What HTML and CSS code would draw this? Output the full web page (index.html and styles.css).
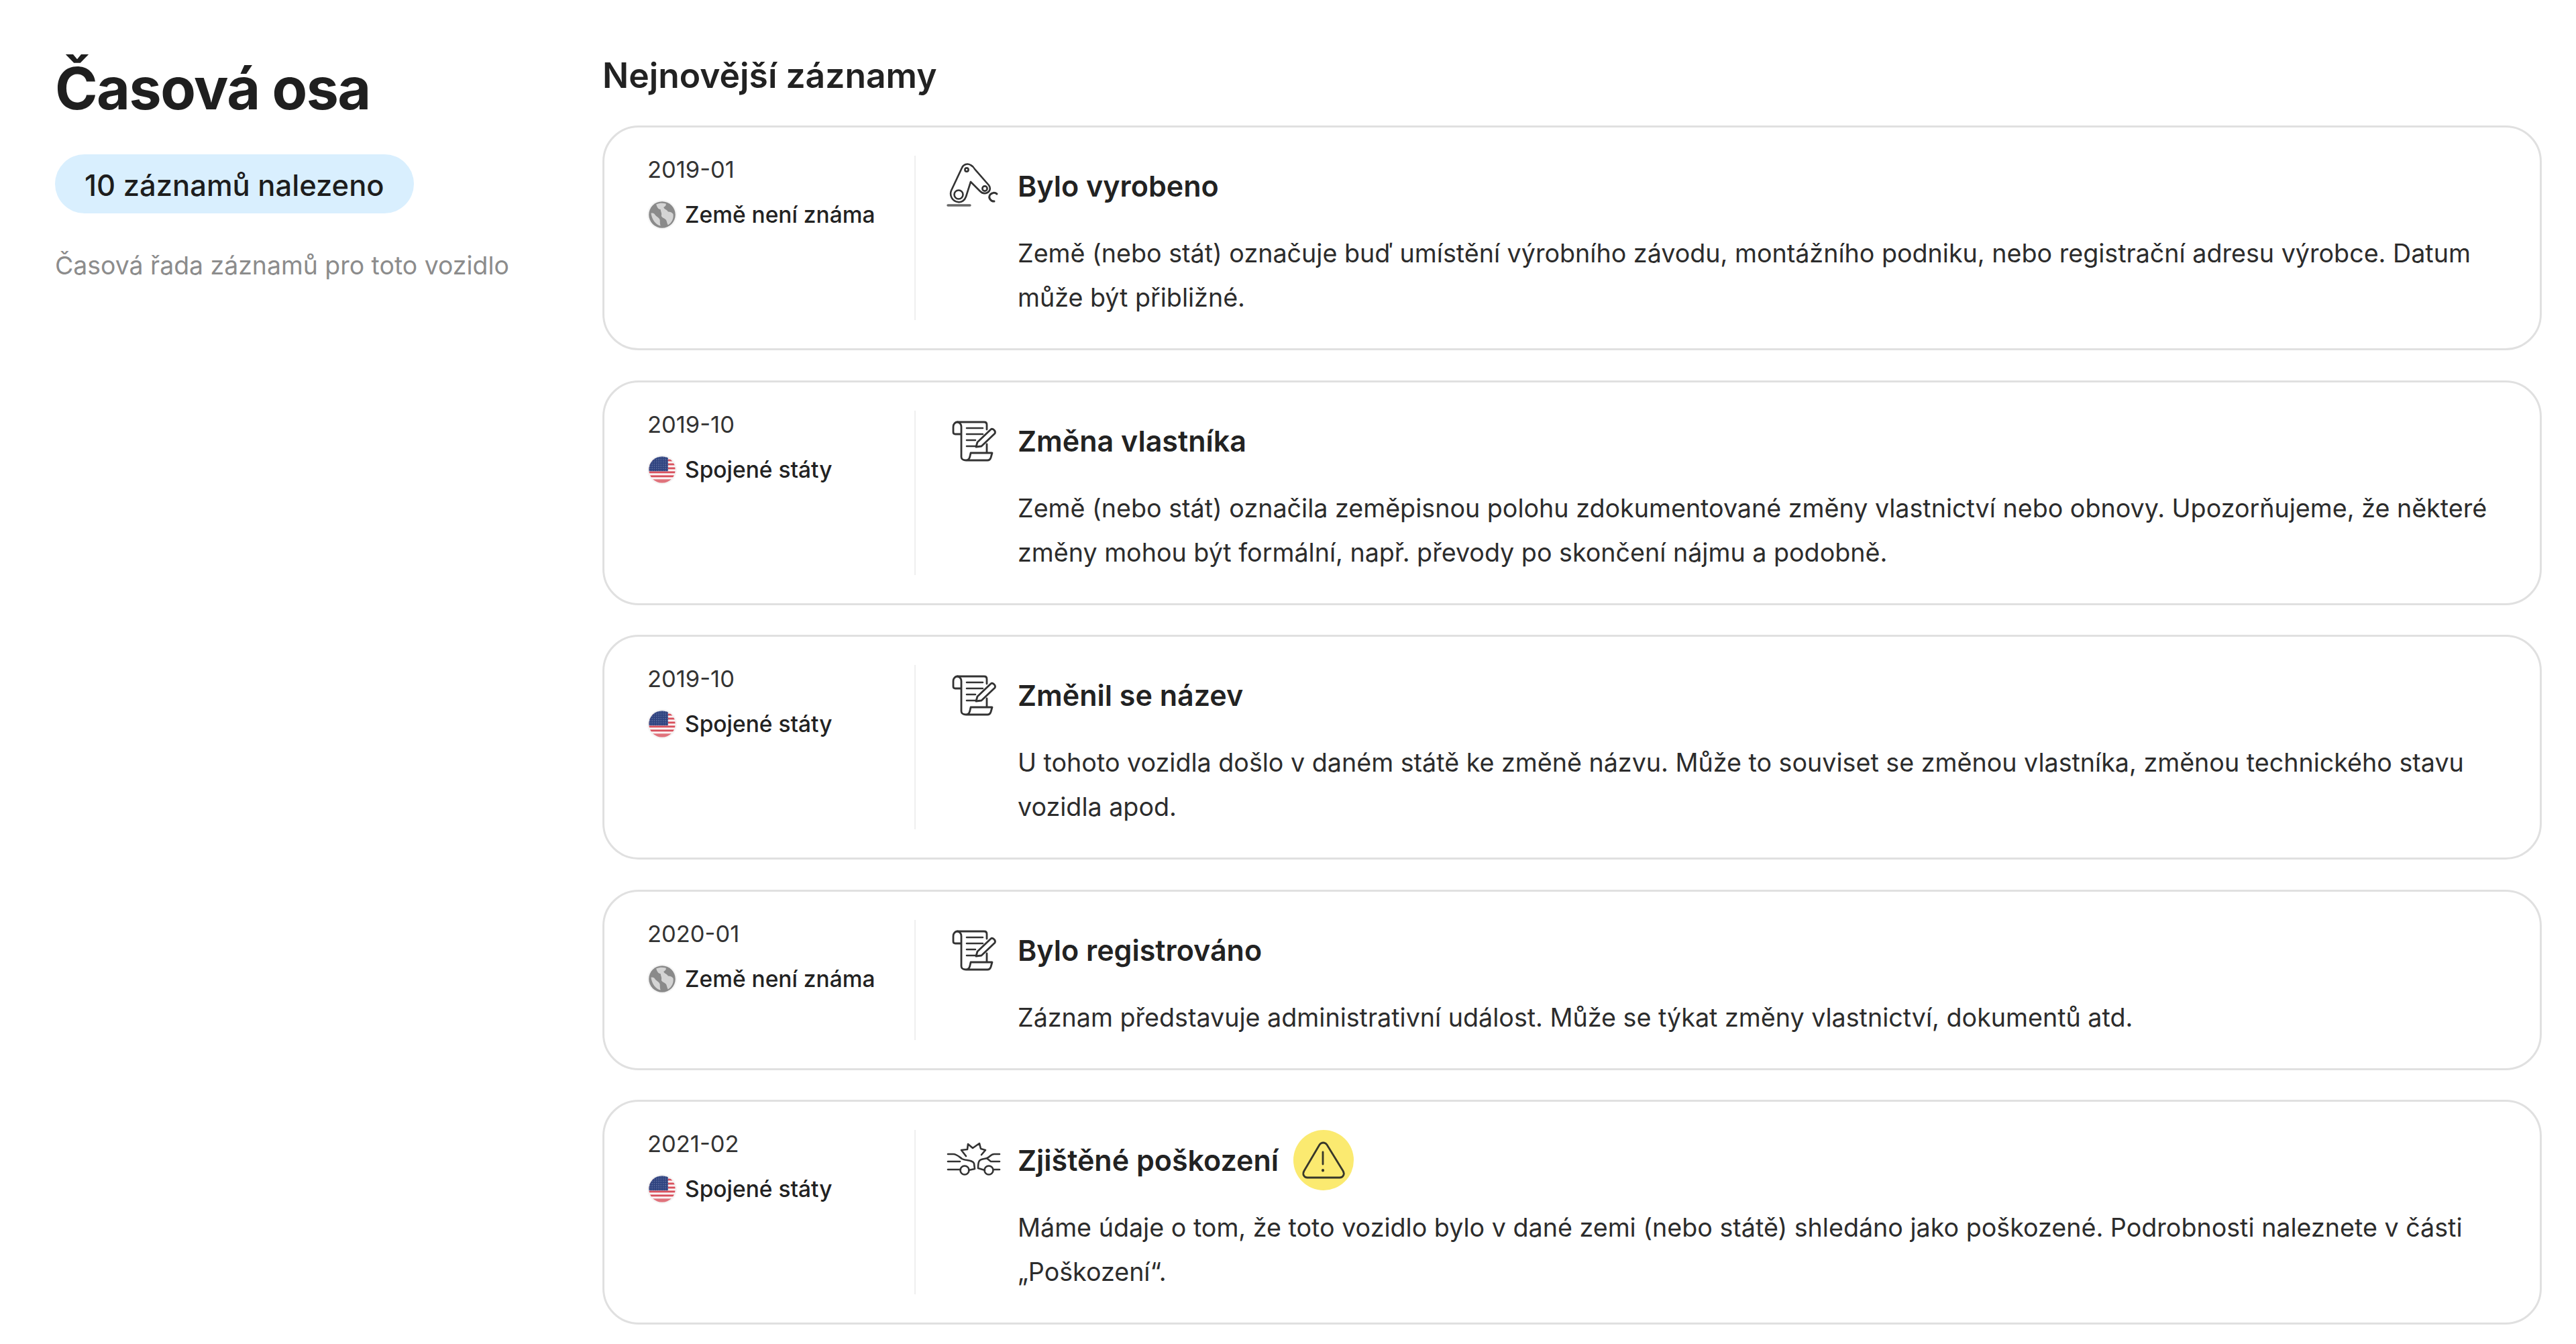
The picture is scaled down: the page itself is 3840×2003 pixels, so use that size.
FILE: index.html
```html
<!DOCTYPE html>
<html lang="cs">
<head>
<meta charset="utf-8">
<title>Časová osa</title>
<link rel="stylesheet" href="styles.css">
</head>
<body>
<svg class="defs" width="0" height="0" aria-hidden="true">
  <defs>
    <clipPath id="disc"><circle cx="18" cy="18" r="18"/></clipPath>
    <pattern id="stars" width="3" height="3" patternUnits="userSpaceOnUse">
      <circle cx="1.5" cy="1.5" r="0.6" fill="#8f9cc0"/>
    </pattern>
    <symbol id="flag" viewBox="0 0 40 40">
      <circle cx="20" cy="20" r="20" fill="#f5f5f5"/>
      <g transform="translate(2 2)" clip-path="url(#disc)">
        <rect width="36" height="36" fill="#fbf3f3"/>
        <rect y="4" width="36" height="2.6" fill="#d8505c"/>
        <rect y="9.4" width="36" height="2.6" fill="#d8505c"/>
        <rect y="14.8" width="36" height="2.6" fill="#d8505c"/>
        <rect y="20.2" width="36" height="2.6" fill="#d8505c"/>
        <rect y="25.6" width="36" height="2.6" fill="#d8505c"/>
        <rect y="31" width="36" height="5" fill="#e0737c"/>
        <rect width="26" height="20" fill="#2f4380"/>
        <rect width="26" height="20" fill="url(#stars)"/>
      </g>
    </symbol>
    <symbol id="globe" viewBox="0 0 40 40">
      <circle cx="20" cy="20" r="20" fill="#f5f5f5"/>
      <circle cx="20" cy="20" r="18" fill="#8a8a8a"/>
      <path d="M12 6c4-2 9-2 13-1 1 2-1 4-3 5 1 3 5 3 6 6 3 0 5 1 7 3 1 6-2 12-7 15-2-3-1-6-4-8-2-2-5-2-5-5 1-3-1-5-1-8-3 0-5-3-6-7z" fill="#d4d4d4"/>
      <path d="M5 18c3-1 5 1 6 3 2 2 5 3 6 6 0 3 0 6 1 8-7-1-12-9-13-17z" fill="#d4d4d4"/>
    </symbol>
    <symbol id="robot" viewBox="0 2 110 80">
      <g fill="none" stroke="#333" stroke-width="2.6" stroke-linecap="round" stroke-linejoin="round">
        <path d="M13 71h33" stroke-width="3.4" stroke="#666"/>
        <path d="M18 49 34 15c2-5 8-7 13-4 4 2 5 4 6 6l21 24c3 4 2 9-2 11-4 2-8 1-11-2L47 36l-7 22c-2 6-7 9-12 8-8-1-13-9-10-17z"/>
        <circle cx="29" cy="55" r="6.5"/>
        <circle cx="41" cy="18" r="2.6"/>
        <circle cx="68" cy="46" r="3.6"/>
        <path d="M86 54a7 7 0 0 0-10 1 6 6 0 0 0 0 7 7 7 0 0 0 6 3" stroke-width="3"/>
      </g>
    </symbol>
    <symbol id="scroll" viewBox="0 2 110 80">
      <g fill="none" stroke="#333" stroke-width="2.8" stroke-linecap="round" stroke-linejoin="round">
        <path d="M27 14h40c3 0 4 2 4 4v7"/>
        <path d="M33 32H24c-2 0-3-1-3-3v-8c0-4 3-7 6-7s6 3 6 7v45c0 3 3 5 7 5h32c3 0 4-1 5-4l2-7H47c-1 4-1 11-7 11"/>
        <path d="M71 47v12"/>
        <path d="M41 23h24M41 32h24M41 41h13M41 50h14" stroke-width="2.6"/>
        <path d="M55 51l2-7 20-19c1-1 3-1 5 1s2 3 1 5L63 50z"/>
      </g>
    </symbol>
    <symbol id="crash" viewBox="0 -2 110 80">
      <g fill="none" stroke="#333" stroke-width="2.6" stroke-linecap="round" stroke-linejoin="round">
        <path d="M40 32 33 23l9-1 1-8 7 6 10-7 2 8 7 2-6 7"/>
        <path d="M13 29h8c5 0 9 4 13 7 5 3 16 1 18 7l1 8-9 2"/>
        <path d="M13 40h18"/>
        <path d="M13 52h19"/>
        <circle cx="38" cy="53" r="6.5"/>
        <path d="M90 29h-8c-4 0-6 3-9 5-3 3-10 1-13 5-2 2-2 8-2 11l10 3"/>
        <path d="M90 40H77l-5-4"/>
        <path d="M90 52h-9"/>
        <circle cx="74" cy="53" r="6.5"/>
      </g>
    </symbol>
    <symbol id="warn" viewBox="8 8 90 90">
      <g fill="none" stroke="#37372a" stroke-width="2.8" stroke-linecap="round" stroke-linejoin="round">
        <path d="M47 30c3-4 8-4 11 0l24 39c3 5 0 10-5 10H29c-5 0-8-5-5-10z"/>
        <path d="M52 41v18"/>
        <path d="M52 68v.5" stroke-width="4"/>
      </g>
    </symbol>
  </defs>
</svg>
<div class="page">
  <aside class="side">
    <h1 class="side-title">Časová osa</h1>
    <div class="pill">10 záznamů nalezeno</div>
    <p class="side-note">Časová řada záznamů pro toto vozidlo</p>
  </aside>
  <main class="main">
    <h2 class="main-title">Nejnovější záznamy</h2>
    <div class="list">
      <article class="card">
        <div class="meta">
          <div class="date">2019-01</div>
          <div class="place"><svg class="place-icon"><use href="#globe"/></svg>Země není známa</div>
        </div>
        <div class="body">
          <div class="head"><svg class="ev-icon"><use href="#robot"/></svg><h3 class="ev-title">Bylo vyrobeno</h3></div>
          <p class="text">Země (nebo stát) označuje buď umístění výrobního závodu, montážního podniku, nebo registrační adresu výrobce. Datum může být přibližné.</p>
        </div>
      </article>
      <article class="card">
        <div class="meta">
          <div class="date">2019-10</div>
          <div class="place"><svg class="place-icon"><use href="#flag"/></svg>Spojené státy</div>
        </div>
        <div class="body">
          <div class="head"><svg class="ev-icon"><use href="#scroll"/></svg><h3 class="ev-title">Změna vlastníka</h3></div>
          <p class="text">Země (nebo stát) označila zeměpisnou polohu zdokumentované změny vlastnictví nebo obnovy. Upozorňujeme, že některé změny mohou být formální, např. převody po skončení nájmu a podobně.</p>
        </div>
      </article>
      <article class="card">
        <div class="meta">
          <div class="date">2019-10</div>
          <div class="place"><svg class="place-icon"><use href="#flag"/></svg>Spojené státy</div>
        </div>
        <div class="body">
          <div class="head"><svg class="ev-icon"><use href="#scroll"/></svg><h3 class="ev-title">Změnil se název</h3></div>
          <p class="text">U tohoto vozidla došlo v daném státě ke změně názvu. Může to souviset se změnou vlastníka, změnou technického stavu vozidla apod.</p>
        </div>
      </article>
      <article class="card">
        <div class="meta">
          <div class="date">2020-01</div>
          <div class="place"><svg class="place-icon"><use href="#globe"/></svg>Země není známa</div>
        </div>
        <div class="body">
          <div class="head"><svg class="ev-icon"><use href="#scroll"/></svg><h3 class="ev-title">Bylo registrováno</h3></div>
          <p class="text">Záznam představuje administrativní událost. Může se týkat změny vlastnictví, dokumentů atd.</p>
        </div>
      </article>
      <article class="card">
        <div class="meta">
          <div class="date">2021-02</div>
          <div class="place"><svg class="place-icon"><use href="#flag"/></svg>Spojené státy</div>
        </div>
        <div class="body">
          <div class="head"><svg class="ev-icon"><use href="#crash"/></svg><h3 class="ev-title">Zjištěné poškození</h3><span class="badge"><svg class="badge-icon"><use href="#warn"/></svg></span></div>
          <p class="text">Máme údaje o tom, že toto vozidlo bylo v dané zemi (nebo státě) shledáno jako poškozené. Podrobnosti naleznete v části „Poškození“.</p>
        </div>
      </article>
    </div>
  </main>
</div>
</body>
</html>
```
FILE: styles.css
```css
* { box-sizing: border-box; }
html, body { margin: 0; padding: 0; background: #fff; }
body { font-family: Inter, "Liberation Sans", sans-serif; color: #222; height: 2003px; overflow: hidden; }
.defs { position: absolute; }
.page { display: flex; padding: 0 51px 0 82px; }
.side { width: 816px; flex: none; padding-top: 76px; }
.side-title { margin: 0; font-size: 86px; line-height: 112px; font-weight: 700; color: #1f1f1f; letter-spacing: -1.5px; }
.pill { display: inline-block; margin-top: 42px; height: 88px; line-height: 92px; padding: 0 44px; border-radius: 44px; background: #d9effe; font-size: 43.5px; font-weight: 500; color: #1d1d1d; }
.side-note { margin: 55px 0 0; font-size: 37.4px; line-height: 46px; color: #8c8c8c; }
.main { flex: 1; min-width: 0; padding-top: 80px; }
.main-title { margin: 0 0 43px; font-size: 51.6px; line-height: 64px; font-weight: 600; color: #222; }
.list { display: flex; flex-direction: column; gap: 44.5px; }
.card { display: flex; border: 3px solid #e0e0e0; border-radius: 54px; padding: 42px 64px 42px 64px; background: #fff; }
.meta { width: 400px; flex: none; border-right: 2px solid #efefef; padding-top: 1px; }
.date { font-size: 34.5px; line-height: 40px; color: #333; }
.place { display: flex; align-items: center; margin-top: 22px; font-size: 33.5px; line-height: 50px; font-weight: 500; color: #222; }
.place-icon { width: 44px; height: 44px; margin-right: 12px; flex: none; }
.body { flex: 1; min-width: 0; padding-left: 35px; }
.head { display: flex; align-items: center; height: 90px; }
.ev-icon { width: 110px; height: 80px; flex: none; margin-right: 7px; }
.ev-title { margin: 0; font-size: 43px; line-height: 56px; font-weight: 600; color: #222; }
.badge { display: flex; align-items: center; justify-content: center; width: 90px; height: 90px; margin-left: 22px; border-radius: 50%; background: #fbea70; }
.badge-icon { width: 90px; height: 90px; }
.text { margin: 23px 0 0; padding-left: 117px; font-size: 37.65px; line-height: 66px; color: #2c2c2c; }
```
